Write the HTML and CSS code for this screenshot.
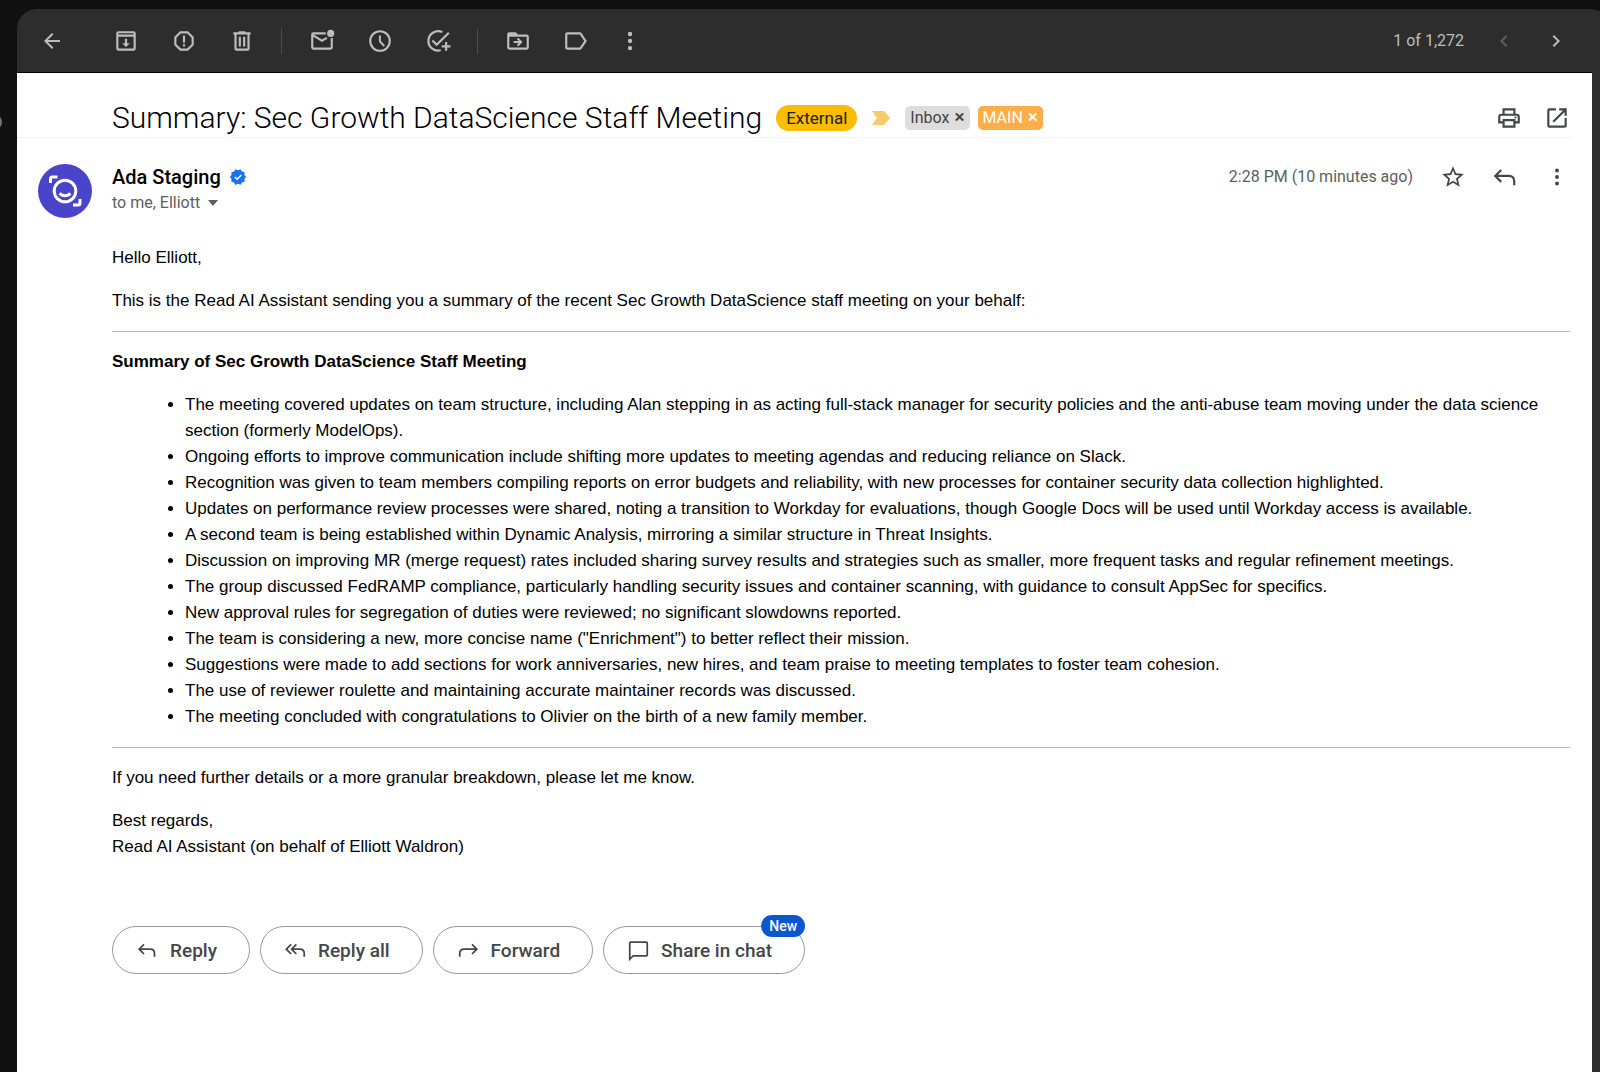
FILE: index.html
```html
<!DOCTYPE html>
<html lang="en">
<head>
    <meta charset="UTF-8">
    <meta name="viewport" content="width=device-width, initial-scale=1.0">
    <title>Summary: Sec Growth DataScience Staff Meeting</title>
    <link rel="stylesheet" href="styles.css">
</head>
<body>
    <span class="edge-dot"></span>
    <main class="panel">
        <!-- Toolbar -->
        <div class="toolbar">
            <button class="tool back" aria-label="Back">
                <svg class="icon-sm" viewBox="0 0 24 24"><path d="M20 11H7.83l5.59-5.59L12 4l-8 8 8 8 1.41-1.41L7.83 13H20z"/></svg>
            </button>
            <button class="tool" aria-label="Archive">
                <svg viewBox="0 0 24 24"><path fill-rule="evenodd" d="M5 3h14a2 2 0 0 1 2 2v14a2 2 0 0 1-2 2H5a2 2 0 0 1-2-2V5a2 2 0 0 1 2-2zm0 1.800v1.200h14V4.800zM5 8v11h14V8zM11 10h2v4h2.500L12 17.500 8.500 14H11z"/></svg>
            </button>
            <button class="tool" aria-label="Report spam">
                <svg viewBox="0 0 24 24"><path fill-rule="evenodd" d="M15.730 3H8.270L3 8.270v7.460L8.270 21h7.460L21 15.730V8.270zM19 14.900L14.900 19H9.100L5 14.900V9.100L9.100 5h5.800L19 9.100zM11 7h2v6.500h-2zM11 15h2v2h-2z"/></svg>
            </button>
            <button class="tool" aria-label="Delete">
                <svg viewBox="0 0 24 24"><path fill-rule="evenodd" d="M15 4V3H9v1H4v2h1v13a2 2 0 0 0 2 2h10a2 2 0 0 0 2-2V6h1V4zM7 6h10v13H7zM9 8h2v9H9zM13 8h2v9h-2z"/></svg>
            </button>
            <span class="separator"></span>
            <button class="tool" aria-label="Mark as unread">
                <svg viewBox="0 0 24 24"><path d="M15.500 4H4a2 2 0 0 0-2 2v12a2 2 0 0 0 2 2h16a2 2 0 0 0 2-2V9a4.500 4.500 0 0 1-2 .450V18H4V8l8 5 5.300-3.300a4.500 4.500 0 0 1-1.400-1.500L12 10.700 4.300 6h11.300a4.500 4.500 0 0 1-.1-2z"/><circle cx="20" cy="5" r="3.300"/></svg>
            </button>
            <button class="tool" aria-label="Snooze">
                <svg viewBox="0 0 24 24"><path d="M12 2a10 10 0 1 0 0 20 10 10 0 0 0 0-20zm0 18a8 8 0 1 1 0-16 8 8 0 0 1 0 16zM12.800 7H11v5.700l4.200 4.500 1.400-1.300-3.800-4z"/></svg>
            </button>
            <button class="tool" aria-label="Add to tasks">
                <svg class="line" viewBox="0 0 24 24"><path d="M16 3.800A9 9 0 1 0 14.500 20.600M6.800 11.500l4 4L22 4.300M19.500 13v8M15.500 17h8"/></svg>
            </button>
            <span class="separator"></span>
            <button class="tool" aria-label="Move to">
                <svg viewBox="0 0 24 24"><path fill-rule="evenodd" d="M20 6h-8l-2-2H4a2 2 0 0 0-2 2v12a2 2 0 0 0 2 2h16a2 2 0 0 0 2-2V8a2 2 0 0 0-2-2zM4 8h16v10H4zM12.200 9l4 4-4 4-1.300-1.300 1.800-1.800H8v-1.800h4.700l-1.800-1.800z"/></svg>
            </button>
            <button class="tool" aria-label="Labels">
                <svg viewBox="0 0 24 24"><path fill-rule="evenodd" d="M17.200 4.900C16.800 4.300 16.200 4 15.500 4H4a2 2 0 0 0-2 2v12a2 2 0 0 0 2 2h11.500c.7 0 1.300-.3 1.700-.9L22 12zM15.500 18H4V6h11.500l4.100 6z"/></svg>
            </button>
            <button class="tool more" aria-label="More">
                <svg viewBox="0 0 24 24"><circle cx="12" cy="5.500" r="2"/><circle cx="12" cy="12" r="2"/><circle cx="12" cy="18.500" r="2"/></svg>
            </button>
            <span class="counter">1 of 1,272</span>
            <button class="tool nav" aria-label="Newer" disabled>
                <svg class="icon-sm" viewBox="0 0 24 24"><path d="M15.400 7.400L14 6l-6 6 6 6 1.400-1.400-4.600-4.600z"/></svg>
            </button>
            <button class="tool nav" aria-label="Older">
                <svg class="icon-sm" viewBox="0 0 24 24"><path d="M8.600 16.600L10 18l6-6-6-6-1.400 1.400 4.600 4.600z"/></svg>
            </button>
        </div>

        <div class="message">
            <!-- Subject -->
            <header class="subject">
                <h1>Summary: Sec Growth DataScience Staff Meeting</h1>
                <span class="external">External</span>
                <svg class="important" viewBox="0 0 18 14"><path d="M0 0h12l6 7-6 7H0l5-7z"/></svg>
                <span class="label inbox">Inbox <button aria-label="Remove Inbox">×</button></span>
                <span class="label main">MAIN <button aria-label="Remove MAIN">×</button></span>
                <div class="actions">
                    <button aria-label="Print">
                        <svg viewBox="0 0 24 24"><path fill-rule="evenodd" d="M19 8h-1V3H6v5H5a3 3 0 0 0-3 3v6h4v4h12v-4h4v-6a3 3 0 0 0-3-3zM8 5h8v3H8zm8 14H8v-4h8zm2-4v-2H6v2H4v-4a1 1 0 0 1 1-1h14a1 1 0 0 1 1 1v4z"/><circle cx="18" cy="11.500" r="1"/></svg>
                    </button>
                    <button aria-label="Open in new window">
                        <svg viewBox="0 0 24 24"><path d="M19 19H5V5h6V3H5a2 2 0 0 0-2 2v14a2 2 0 0 0 2 2h14a2 2 0 0 0 2-2v-7h-2zM14 3v2h3.600l-9.800 9.800 1.400 1.400L19 6.400V10h2V3z"/></svg>
                    </button>
                </div>
            </header>

            <!-- Sender -->
            <div class="sender">
                <svg class="avatar" viewBox="0 0 54 54">
                    <circle class="disc" cx="27" cy="27" r="27"/>
                    <path d="M12.500 19v-4q0-2 2-2h5M42 35v4q0 2-2 2h-5"/>
                    <circle cx="27" cy="27" r="10.800"/>
                    <path d="M21.500 29.500q5.500 4.500 11 0"/>
                </svg>
                <div class="who">
                    <div class="name">Ada Staging
                        <svg class="verified" viewBox="0 0 24 24"><path d="M23 12l-2.440-2.790.340-3.690-3.610-.820-1.890-3.200L12 2.960 8.600 1.500 6.710 4.690 3.100 5.500l.340 3.700L1 12l2.440 2.790-.340 3.700 3.610.820L8.600 22.500l3.400-1.470 3.400 1.460 1.890-3.190 3.610-.820-.340-3.690z"/><path class="tick" d="M7.800 12l3 3 5.600-5.600"/></svg>
                    </div>
                    <div class="to">to me, Elliott
                        <button class="details" aria-label="Show details"><svg viewBox="0 0 10 6"><path d="M0 0h10L5 6z"/></svg></button>
                    </div>
                </div>
                <span class="time">2:28 PM (10 minutes ago)</span>
                <div class="actions">
                    <button aria-label="Star">
                        <svg viewBox="0 0 24 24"><path d="M22 9.240l-7.190-.620L12 2 9.190 8.630 2 9.240l5.460 4.730L5.820 21 12 17.270 18.180 21l-1.630-7.030zM12 15.400l-3.760 2.270 1-4.280-3.320-2.880 4.380-.380L12 6.100l1.710 4.040 4.380.380-3.320 2.880 1 4.280z"/></svg>
                    </button>
                    <button aria-label="Reply">
                        <svg class="line" viewBox="0 0 24 24"><path d="M8.500 5.500L3 11l5.500 5.500M3 11h12.500q5 0 5 5v3.500"/></svg>
                    </button>
                    <button aria-label="More">
                        <svg viewBox="0 0 24 24"><circle cx="12" cy="6" r="1.800"/><circle cx="12" cy="12" r="1.800"/><circle cx="12" cy="18" r="1.800"/></svg>
                    </button>
                </div>
            </div>

            <!-- Mail body -->
            <article class="mail">
                <p>Hello Elliott,</p>
                <p>This is the Read AI Assistant sending you a summary of the recent Sec Growth DataScience staff meeting on your behalf:</p>
                <hr>
                <p><strong>Summary of Sec Growth DataScience Staff Meeting</strong></p>
                <ul>
                    <li>The meeting covered updates on team structure, including Alan stepping in as acting full-stack manager for security policies and the anti-abuse team moving under the data science section (formerly ModelOps).</li>
                    <li>Ongoing efforts to improve communication include shifting more updates to meeting agendas and reducing reliance on Slack.</li>
                    <li>Recognition was given to team members compiling reports on error budgets and reliability, with new processes for container security data collection highlighted.</li>
                    <li>Updates on performance review processes were shared, noting a transition to Workday for evaluations, though Google Docs will be used until Workday access is available.</li>
                    <li>A second team is being established within Dynamic Analysis, mirroring a similar structure in Threat Insights.</li>
                    <li>Discussion on improving MR (merge request) rates included sharing survey results and strategies such as smaller, more frequent tasks and regular refinement meetings.</li>
                    <li>The group discussed FedRAMP compliance, particularly handling security issues and container scanning, with guidance to consult AppSec for specifics.</li>
                    <li>New approval rules for segregation of duties were reviewed; no significant slowdowns reported.</li>
                    <li>The team is considering a new, more concise name ("Enrichment") to better reflect their mission.</li>
                    <li>Suggestions were made to add sections for work anniversaries, new hires, and team praise to meeting templates to foster team cohesion.</li>
                    <li>The use of reviewer roulette and maintaining accurate maintainer records was discussed.</li>
                    <li>The meeting concluded with congratulations to Olivier on the birth of a new family member.</li>
                </ul>
                <hr>
                <p>If you need further details or a more granular breakdown, please let me know.</p>
                <p>Best regards,<br>Read AI Assistant (on behalf of Elliott Waldron)</p>
            </article>

            <!-- Reply buttons -->
            <div class="replies">
                <button class="pill">
                    <svg class="line" viewBox="0 0 24 24"><path d="M8 5l-5.500 5.500L8 16M2.500 10.500H15q5 0 5 5V19"/></svg>
                    Reply
                </button>
                <button class="pill">
                    <svg class="line" viewBox="0 0 24 24"><path d="M7 5l-5.500 5.500L7 16M13 5l-5.500 5.500L13 16M7.500 10.500H17q5 0 5 5V19"/></svg>
                    Reply all
                </button>
                <button class="pill">
                    <svg class="line" viewBox="0 0 24 24"><path d="M16 5l5.500 5.500L16 16M21.500 10.500H7q-5 0-5 5V19"/></svg>
                    Forward
                </button>
                <button class="pill share">
                    <svg class="line" viewBox="0 0 24 24"><path d="M2 22V3.500q0-1 1-1h18q1 0 1 1V17q0 1-1 1H6z"/></svg>
                    Share in chat
                    <span class="new">New</span>
                </button>
            </div>
        </div>
    </main>
</body>
</html>
```

FILE: styles.css
```css
* {
    box-sizing: border-box;
}

body {
    margin: 0;
    min-height: 100vh;
    display: flex;
    overflow: hidden;
    position: relative;
    background-color: #111;
    color: #000;
    font-family: "Google Sans", Roboto, sans-serif;
}

button {
    padding: 0;
    border: none;
    background: none;
    color: inherit;
    font: inherit;
    cursor: pointer;
}

svg {
    display: block;
    width: 26px;
    height: 26px;
    fill: currentColor;
}

.icon-sm {
    width: 24px;
    height: 24px;
}

.line {
    fill: none;
    stroke: currentColor;
    stroke-width: 2;
}

.edge-dot {
    position: absolute;
    left: -14px;
    top: 114px;
    width: 16px;
    height: 16px;
    border-radius: 50%;
    background-color: #777;
}

.panel {
    flex: 1;
    display: flex;
    flex-direction: column;
    margin: 9px -10px 0 17px;
    padding-right: 18px;
    border-radius: 20px 20px 0 0;
    background-color: #2d2d2d;
}

/* Toolbar */
.toolbar {
    display: flex;
    align-items: center;
    height: 64px;
    padding-right: 10px;
    border-bottom: 1px solid #000;
    color: #bdbdbd;
}

.tool {
    display: flex;
    justify-content: center;
    width: 58px;
}

.back {
    margin: 0 16px 0 6px;
}

.separator {
    width: 1px;
    height: 26px;
    margin: 0 11px 0 10px;
    background-color: #4d4d4d;
}

.more {
    width: 50px;
}

.counter {
    margin-left: auto;
    margin-right: 14px;
    font-size: 16px;
}

.nav {
    width: 52px;
}

.nav:disabled {
    color: #5f5f5f;
}

/* Message */
.message {
    flex: 1;
    padding: 26px 22px 0 0;
    background-color: #fff;
}

.subject {
    display: flex;
    align-items: center;
    height: 39px;
    padding-left: 95px;
    border-bottom: 1px solid #f2f2f2;
}

h1 {
    margin: 0 14px 0 0;
    font-size: 30px;
    line-height: 36px;
    font-weight: 300;
}

.external {
    padding: 0 10px;
    border-radius: 13px;
    background-color: #fbbc04;
    color: #202124;
    font-size: 17px;
    line-height: 26px;
}

.important {
    width: 18px;
    height: 14px;
    margin: 0 15px;
    fill: #f7cb69;
}

.label {
    margin-right: 8px;
    padding: 0 5px;
    border-radius: 5px;
    font-size: 16px;
    line-height: 24px;
}

.label button {
    margin-left: 1px;
    font-size: 19px;
    font-weight: 500;
    line-height: 20px;
}

.inbox {
    background-color: #ddd;
    color: #444;
}

.main {
    background-color: #ffad46;
    color: #fff;
}

.actions {
    display: flex;
    color: #444746;
}

.actions button {
    display: flex;
    justify-content: center;
    width: 52px;
}

.subject .actions {
    margin-left: auto;
    margin-right: -11px;
}

.subject .actions button {
    width: 48px;
}

.sender {
    display: flex;
    align-items: flex-start;
    padding-top: 26px;
}

.avatar {
    width: 54px;
    height: 54px;
    margin: 0 20px 0 21px;
    fill: none;
    stroke: #fff;
    stroke-width: 3;
}

.disc {
    fill: #4a44cb;
    stroke: none;
}

.name {
    display: flex;
    align-items: center;
    gap: 8px;
    font-size: 20px;
    line-height: 26px;
    font-weight: 500;
}

.verified {
    width: 18px;
    height: 18px;
    fill: #1a73e8;
}

.tick {
    fill: none;
    stroke: #fff;
    stroke-width: 2;
}

.to {
    display: flex;
    align-items: center;
    gap: 8px;
    color: #5e5e5e;
    font-size: 16px;
    line-height: 26px;
}

.details svg {
    width: 10px;
    height: 6px;
}

.time {
    margin-left: auto;
    margin-right: 14px;
    color: #5e5e5e;
    font-size: 16px;
    line-height: 26px;
}

.sender .actions {
    margin-right: -13px;
}

/* Mail body */
.mail {
    margin: 27px 0 0 95px;
    font-family: "Liberation Sans", Arial, sans-serif;
    font-size: 17px;
    line-height: 26px;
}

.mail p {
    margin: 0 0 17px;
}

.mail hr {
    height: 1px;
    margin: 17px 0;
    border: none;
    background-color: #b5b5b5;
}

.mail ul {
    margin: 17px 0;
    padding-left: 73px;
}

/* Reply buttons */
.replies {
    display: flex;
    gap: 10px;
    margin: 66px 0 0 95px;
}

.pill {
    display: flex;
    align-items: center;
    gap: 12px;
    height: 48px;
    padding: 0 32px 0 24px;
    border: 1px solid #999;
    border-radius: 24px;
    color: #444746;
    font-size: 19px;
    font-weight: 500;
}

.pill svg {
    width: 21px;
    height: 21px;
}

.share {
    position: relative;
}

.new {
    position: absolute;
    top: -12px;
    right: -1px;
    padding: 0 8px;
    border-radius: 11px;
    background-color: #0b57d0;
    color: #fff;
    font-size: 14px;
    line-height: 22px;
}
```
